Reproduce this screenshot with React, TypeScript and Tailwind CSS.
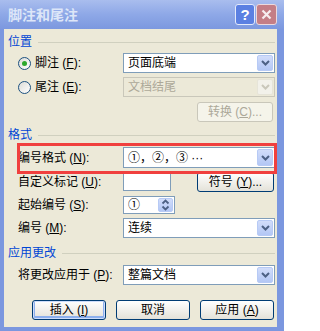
import React from "react";

const Chevron = ({ color = "#4D6185" }: { color?: string }) => (
  <svg width="9" height="6" viewBox="0 0 9 6">
    <path d="M1 1 L4.5 4.5 L8 1" stroke={color} strokeWidth="2" fill="none" />
  </svg>
);

const Combo = ({
  text,
  disabled = false,
  tall = false,
}: {
  text: string;
  disabled?: boolean;
  tall?: boolean;
}) => (
  <div
    className={`flex w-[152px] ${tall ? "h-[21px]" : "h-[20px]"} border p-[1px] ${
      disabled ? "border-[#C9C7BA] bg-[#ECE9D8]" : "border-[#7F9DB9] bg-white"
    }`}
  >
    <div
      className={`flex flex-1 items-center pl-[3px] ${
        disabled ? "text-[#ACA899]" : "text-black"
      }`}
    >
      {text}
    </div>
    <div
      className={`flex w-[16px] items-center justify-center rounded-[2px] border ${
        disabled
          ? "border-[#E6E4D8] bg-[#F2F1EA]"
          : "border-[#B7CAF5] bg-linear-to-b from-[#D2DDFA] to-[#B3C7F5]"
      }`}
    >
      <Chevron color={disabled ? "#C9C7BA" : "#4D6185"} />
    </div>
  </div>
);

const Radio = ({ checked = false }: { checked?: boolean }) => (
  <div className="flex h-[13px] w-[13px] items-center justify-center rounded-full border border-[#1C5180] bg-linear-to-br from-[#DCDCD7] to-white">
    {checked && <div className="h-[5px] w-[5px] rounded-full bg-[#2CA82C]" />}
  </div>
);

const Button = ({
  children,
  w = "w-[74px]",
  isDefault = false,
  disabled = false,
}: {
  children: React.ReactNode;
  w?: string;
  isDefault?: boolean;
  disabled?: boolean;
}) => (
  <button
    className={`${w} flex h-[20px] items-center justify-center rounded-[3px] border text-[12px] ${
      disabled
        ? "border-[#C9C7BA] bg-[#F5F4EA] text-[#ACA899]"
        : "border-[#003C74] bg-linear-to-b from-white to-[#E4E2D9] text-black"
    } ${isDefault ? "shadow-[inset_0_0_0_1px_#CEDDFA,inset_0_-1px_0_2px_#8DB0EE]" : ""}`}
  >
    {children}
  </button>
);

const Header = ({ text, mt }: { text: string; mt: string }) => (
  <div className={`${mt} flex h-[14px] items-center pl-[4px]`}>
    <span className="text-[#0046D5]">{text}</span>
    <div className="ml-[6px] mr-[2px] h-px flex-1 bg-[#D0D0BF]" />
  </div>
);

const Label = ({ children }: { children: React.ReactNode }) => (
  <div className="flex w-[119px] items-center pl-[14px]">{children}</div>
);

export default function App() {
  return (
    <div className="flex h-[331px] w-[284px] flex-col bg-[#7B97DF] font-[family-name:'Liberation_Sans','Noto_Sans_CJK_SC',sans-serif] text-[12px] leading-none text-black">
      {/* title bar */}
      <div className="flex h-[29px] items-center bg-linear-to-b from-[#A9BDEE] via-[#8EA8E7] to-[#7C98DF] pl-[8px] pr-[7px]">
        <span className="text-[14px] font-bold text-[#DDE6F8]">脚注和尾注</span>
        <div className="ml-auto flex gap-[1px]">
          <div className="flex h-[21px] w-[20px] items-center justify-center rounded-[3px] border border-[#E3EAFB] bg-[#5B80E2] text-[15px] font-bold text-white">
            ?
          </div>
          <div className="flex h-[21px] w-[21px] items-center justify-center rounded-[3px] border border-[#EBD9DD] bg-[#C47E86]">
            <svg width="11" height="11" viewBox="0 0 11 11">
              <path d="M1.5 1.5 L9.5 9.5 M9.5 1.5 L1.5 9.5" stroke="#F6EEF0" strokeWidth="2.2" />
            </svg>
          </div>
        </div>
      </div>

      {/* body */}
      <div className="relative mb-[4px] ml-[4px] mr-[7px] flex flex-1 flex-col bg-[#ECE9D8]">
        <Header text="位置" mt="mt-[6px]" />

        <div className="mt-[4px] flex h-[20px] items-center">
          <Label>
            <Radio checked />
            <span className="ml-[4px]">
              脚注 (<u>F</u>):
            </span>
          </Label>
          <Combo text="页面底端" />
        </div>

        <div className="mt-[4px] flex h-[20px] items-center">
          <Label>
            <Radio />
            <span className="ml-[4px]">
              尾注 (<u>E</u>):
            </span>
          </Label>
          <Combo text="文档结尾" disabled />
        </div>

        <div className="mt-[5px] flex h-[20px] justify-end pr-[4px]">
          <Button w="w-[76px]" disabled>
            转换 (<u>C</u>)...
          </Button>
        </div>

        <Header text="格式" mt="mt-[6px]" />

        <div className="mt-[5px] flex h-[21px] items-center">
          <Label>
            编号格式 (<u>N</u>):
          </Label>
          <Combo text="①，②，③ ···" tall />
        </div>

        <div className="mt-[4px] flex h-[20px] items-center">
          <Label>
            自定义标记 (<u>U</u>):
          </Label>
          <div className="h-[18px] w-[48px] border border-[#7F9DB9] bg-white" />
          <div className="ml-auto mr-[3px]">
            <Button w="w-[77px]">
              符号 (<u>Y</u>)...
            </Button>
          </div>
        </div>

        <div className="mt-[4px] flex h-[18px] items-center">
          <Label>
            起始编号 (<u>S</u>):
          </Label>
          <div className="flex h-[18px] w-[52px] border border-[#7F9DB9] bg-white p-[1px]">
            <div className="flex flex-1 items-center pl-[3px]">①</div>
            <div className="flex w-[15px] items-center justify-center rounded-[2px] border border-[#B7CAF5] bg-linear-to-b from-[#D2DDFA] to-[#B3C7F5]">
              <svg width="9" height="12" viewBox="0 0 9 12">
                <path d="M1.5 4.5 L4.5 1.5 L7.5 4.5 M1.5 7.5 L4.5 10.5 L7.5 7.5" stroke="#4D6185" strokeWidth="1.8" fill="none" />
              </svg>
            </div>
          </div>
        </div>

        <div className="mt-[4px] flex h-[20px] items-center">
          <Label>
            编号 (<u>M</u>):
          </Label>
          <Combo text="连续" />
        </div>

        <Header text="应用更改" mt="mt-[8px]" />

        <div className="mt-[5px] flex h-[20px] items-center">
          <Label>
            将更改应用于 (<u>P</u>):
          </Label>
          <Combo text="整篇文档" />
        </div>

        <div className="mt-[15px] flex h-[20px] gap-[10px] pl-[28px]">
          <Button isDefault>
            插入 (<u>I</u>)
          </Button>
          <Button>取消</Button>
          <Button>
            应用 (<u>A</u>)
          </Button>
        </div>

        {/* red highlight */}
        <div className="pointer-events-none absolute left-[13px] top-[114px] h-[31px] w-[260px] border-[3px] border-[#F0403E]" />
      </div>
    </div>
  );
}
